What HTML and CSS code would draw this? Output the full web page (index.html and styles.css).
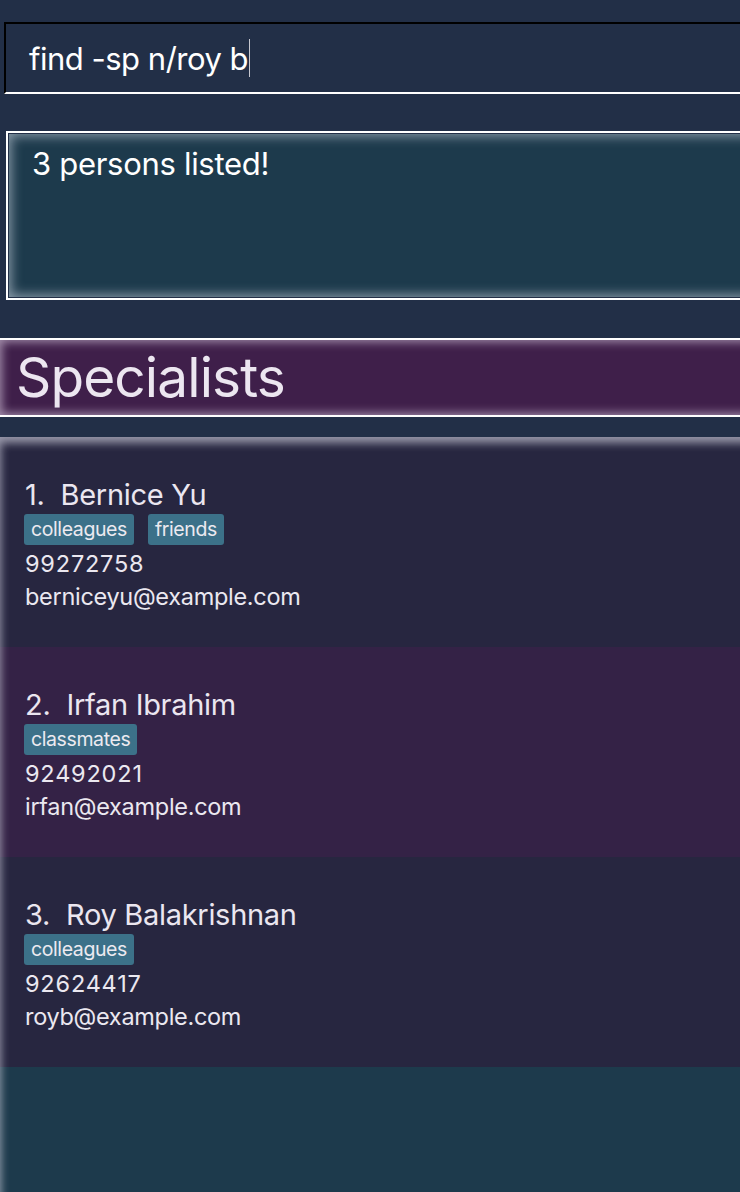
FILE: index.html
```html
<!DOCTYPE html>
<html>
<head>
<meta charset="utf-8">
<link rel="stylesheet" href="styles.css">
</head>
<body>
<div class="app">
  <div class="command"><span class="command-text">find -sp n/roy b</span><span class="caret"></span></div>
  <div class="result"><div class="result-inner">3 persons listed!</div></div>
  <div class="section-title">Specialists</div>
  <div class="list">
    <div class="card card-a">
      <div class="name"><span class="idx">1.</span>Bernice Yu</div>
      <div class="tags"><span class="tag">colleagues</span><span class="tag">friends</span></div>
      <div class="line phone">99272758</div>
      <div class="line">berniceyu@example.com</div>
    </div>
    <div class="card card-b">
      <div class="name"><span class="idx">2.</span>Irfan Ibrahim</div>
      <div class="tags"><span class="tag">classmates</span></div>
      <div class="line phone">92492021</div>
      <div class="line">irfan@example.com</div>
    </div>
    <div class="card card-a">
      <div class="name"><span class="idx">3.</span>Roy Balakrishnan</div>
      <div class="tags"><span class="tag">colleagues</span></div>
      <div class="line phone">92624417</div>
      <div class="line">royb@example.com</div>
    </div>
  </div>
</div>
</body>
</html>
```

FILE: styles.css
```css
html, body {
  margin: 0;
  padding: 0;
  background: #222f47;
  overflow: hidden;
  height: 1192px;
}
body {
  font-family: Inter, "Noto Sans", sans-serif;
  color: #f2f0f5;
}
.app {
  display: flex;
  flex-direction: column;
  width: 760px;
}
.command {
  margin: 22px 0 0 4px;
  height: 68px;
  border-top: 2px solid #000;
  border-left: 2px solid #000;
  border-bottom: 2px solid #fff;
  display: flex;
  align-items: center;
  padding-left: 23px;
}
.command-text {
  font-size: 31px;
  letter-spacing: -0.5px;
  color: #fff;
  line-height: 1;
}
.caret {
  display: inline-block;
  width: 1px;
  height: 38px;
  background: #c8c8d0;
  margin-left: 1px;
}
.result {
  margin: 37px 0 0 6px;
  border: 2px solid #fff;
  padding: 1px;
  height: 163px;
}
.result-inner {
  height: 100%;
  background: #1d3a4c;
  box-shadow: inset 0 0 12px 2px rgba(230, 235, 245, 0.55);
  font-size: 31px;
  letter-spacing: -0.3px;
  line-height: 36px;
  padding: 12px 0 0 23px;
  box-sizing: border-box;
  color: #fff;
}
.section-title {
  margin-top: 38px;
  height: 75px;
  border-top: 2px solid #fff;
  border-bottom: 2px solid #fff;
  background: #3f1f4a;
  box-shadow: inset 0 0 10px 2px rgba(230, 215, 235, 0.6);
  font-size: 55px;
  letter-spacing: -0.9px;
  line-height: 75px;
  padding-left: 16px;
  color: #ece6f0;
}
.list {
  position: relative;
  margin-top: 20px;
  height: 760px;
  background: #1d3a4c;
  display: flex;
  flex-direction: column;
}
.list::after {
  content: "";
  position: absolute;
  inset: 0;
  pointer-events: none;
  box-shadow: inset 5px 10px 8px -4px rgba(210, 210, 225, 0.65);
}
.card {
  height: 210px;
  padding: 41px 0 0 25px;
  box-sizing: border-box;
  display: flex;
  flex-direction: column;
  align-items: flex-start;
}
.card-a { background: #272640; }
.card-b { background: #342246; }
.name {
  font-size: 29px;
  line-height: 34px;
  letter-spacing: -0.3px;
  color: #ebe6f0;
}
.idx {
  margin-right: 16px;
}
.tags {
  display: flex;
  gap: 14px;
  margin-top: 2px;
  margin-left: -1px;
}
.tag {
  background: #3c7189;
  color: #eceaf0;
  border-radius: 3px;
  height: 31px;
  line-height: 31px;
  padding: 0 7px;
  font-size: 19.5px;
  letter-spacing: -0.4px;
}
.tags + .line { margin-top: 2px; }
.line {
  font-size: 23.5px;
  line-height: 33px;
  letter-spacing: -0.3px;
  color: #ebe8f0;
}
.phone {
  letter-spacing: 0.8px;
}
```
